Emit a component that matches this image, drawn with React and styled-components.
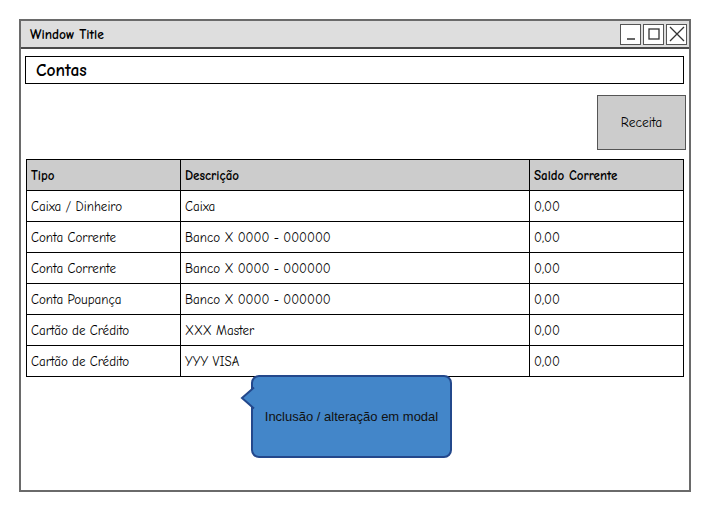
import React from "react";
import styled, { createGlobalStyle } from "styled-components";

const Global = createGlobalStyle`
  html, body { margin: 0; padding: 0; background: #fff; }
  body { font-family: "Comic Sans MS", "Comic Neue", "DejaVu Sans", sans-serif; color: #000; }
`;

const Window = styled.div`
  margin: 19px 0 0 19px;
  width: 668px;
  height: 469px;
  border: 2px solid #6a6a6a;
  display: flex;
  flex-direction: column;
`;

const TitleBar = styled.div`
  height: 26px;
  background: #dedede;
  border-bottom: 2px solid #4a4a4a;
  display: flex;
  align-items: center;
  justify-content: space-between;
  padding: 0 2px 0 9px;
`;

const Title = styled.span`
  font-weight: bold;
  font-size: 13.5px;
`;

const WinButtons = styled.div`
  display: flex;
  gap: 2px;
`;

const WinButton = styled.div`
  width: 19px;
  height: 19px;
  border: 1.5px solid #555;
  background: #fff;
  display: flex;
  align-items: center;
  justify-content: center;
`;

const Body = styled.div`
  flex: 1;
  padding: 7px 5px 0 4px;
  display: flex;
  flex-direction: column;
  position: relative;
`;

const Header = styled.div`
  height: 26px;
  border: 1px solid #000;
  display: flex;
  align-items: center;
  padding-left: 10px;
  font-weight: bold;
  font-size: 17.5px;
`;

const Toolbar = styled.div`
  display: flex;
  justify-content: flex-end;
  margin-top: 11px;
  margin-right: -2px;
`;

const Button = styled.div`
  width: 87px;
  height: 53px;
  background: #cccccc;
  border: 1px solid #555;
  display: flex;
  align-items: center;
  justify-content: center;
  font-size: 13.5px;
`;

const Table = styled.div`
  margin-top: 9px;
  margin-left: 1px;
  width: 656px;
  border: 1px solid #000;
  display: grid;
  grid-template-columns: 153px 349px 1fr;
`;

const Cell = styled.div`
  height: 30px;
  display: flex;
  align-items: center;
  padding-left: 4px;
  font-size: 13px;
  font-weight: ${(p) => (p.$head ? "bold" : "normal")};
  background: ${(p) => (p.$head ? "#cccccc" : "#fff")};
  border-left: ${(p) => (p.$first ? "none" : "1px solid #000")};
  border-top: ${(p) => (p.$top ? "none" : "1px solid #000")};
`;

const Callout = styled.div`
  position: relative;
  margin: -2px 0 0 226px;
  width: 197px;
  height: 79px;
  background: #4386c9;
  border: 2px solid #23488c;
  border-radius: 8px;
  display: flex;
  align-items: center;
  justify-content: center;
  font-family: "Liberation Sans", Arial, sans-serif;
  font-size: 13px;
  color: #111;
`;

const Pointer = styled.svg`
  position: absolute;
  left: -14px;
  top: 9px;
`;

const rows = [
  ["Caixa / Dinheiro", "Caixa", "0,00"],
  ["Conta Corrente", "Banco X 0000 - 000000", "0,00"],
  ["Conta Corrente", "Banco X 0000 - 000000", "0,00"],
  ["Conta Poupança", "Banco X 0000 - 000000", "0,00"],
  ["Cartão de Crédito", "XXX Master", "0,00"],
  ["Cartão de Crédito", "YYY VISA", "0,00"],
];

export default function App() {
  return (
    <>
      <Global />
      <Window>
        <TitleBar>
          <Title>Window Title</Title>
          <WinButtons>
            <WinButton>
              <svg width="14" height="14" viewBox="0 0 14 14">
                <line x1="3" y1="12" x2="11" y2="12" stroke="#333" strokeWidth="1.5" />
              </svg>
            </WinButton>
            <WinButton>
              <svg width="14" height="14" viewBox="0 0 14 14">
                <rect x="2" y="2" width="10" height="10" fill="none" stroke="#333" strokeWidth="1.3" />
              </svg>
            </WinButton>
            <WinButton>
              <svg width="16" height="16" viewBox="0 0 16 16">
                <path d="M1 1 L15 15 M15 1 L1 15" stroke="#333" strokeWidth="1.3" />
              </svg>
            </WinButton>
          </WinButtons>
        </TitleBar>
        <Body>
          <Header>Contas</Header>
          <Toolbar>
            <Button>Receita</Button>
          </Toolbar>
          <Table>
            <Cell $head $first $top>Tipo</Cell>
            <Cell $head $top>Descrição</Cell>
            <Cell $head $top>Saldo Corrente</Cell>
            {rows.map((r, i) =>
              r.map((c, j) => (
                <Cell key={`${i}-${j}`} $first={j === 0}>
                  {c}
                </Cell>
              ))
            )}
          </Table>
          <Callout>
            <Pointer width="16" height="24" viewBox="0 0 16 24">
              <path d="M15 0 L15 2 L3 12 L15 22 L15 24 L16 24 L16 0 Z" fill="#4386c9" />
              <path d="M15 1.5 L3 12 L15 22.5" fill="#4386c9" stroke="#23488c" strokeWidth="2" strokeLinejoin="miter" />
            </Pointer>
            Inclusão / alteração em modal
          </Callout>
        </Body>
      </Window>
    </>
  );
}
